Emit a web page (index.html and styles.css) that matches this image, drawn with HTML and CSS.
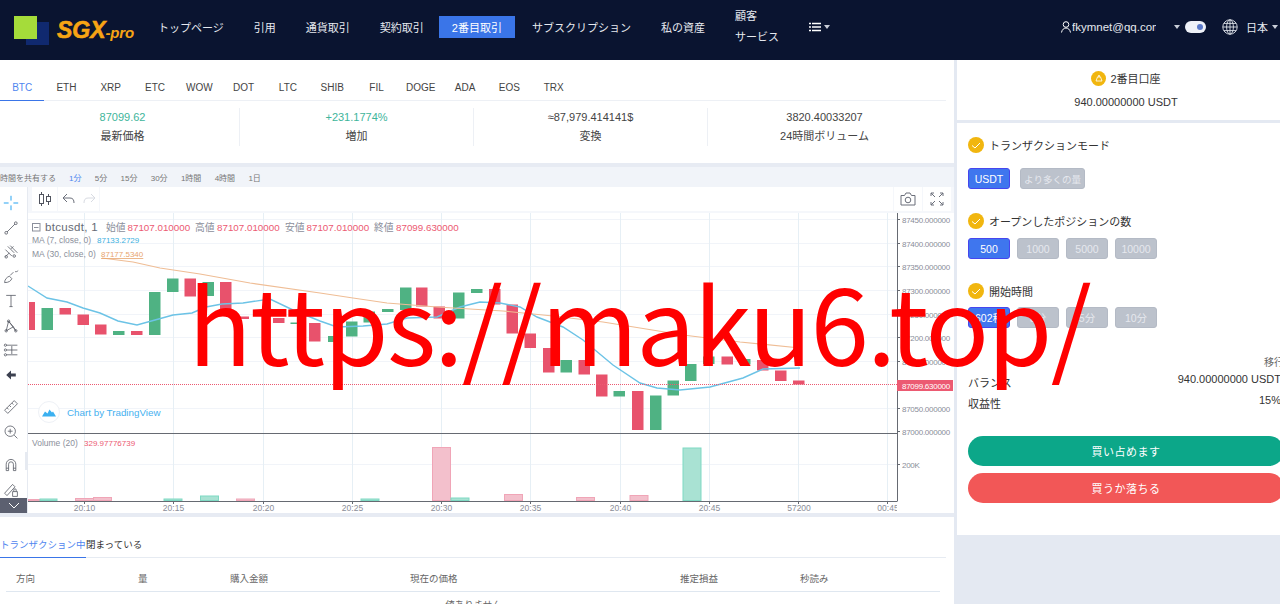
FILE: index.html
```html
<!DOCTYPE html>
<html lang="ja">

<head>
  <meta charset="UTF-8">
  <meta name="viewport" content="width=device-width, initial-scale=1.0">
  <title>SGX-pro</title>
  <link rel="stylesheet" href="styles.css">
</head>

<body>
  <header class="topbar">
    <div class="logo">
      <span class="logo-mark"></span>
      <span class="logo-text">SGX<small>-pro</small></span>
    </div>
    <nav class="nav">
      <a class="nav-item">トップページ</a>
      <a class="nav-item">引用</a>
      <a class="nav-item">通貨取引</a>
      <a class="nav-item">契約取引</a>
      <a class="nav-item nav-active">2番目取引</a>
      <a class="nav-item">サブスクリプション</a>
      <a class="nav-item">私の資産</a>
      <a class="nav-item nav-two-line"><span>顧客</span><span>サービス</span></a>
      <a class="nav-item nav-more">
        <svg width="12" height="10" viewBox="0 0 12 10">
          <path d="M0 1.5h2M3 1.5h9M0 5h2M3 5h9M0 8.5h2M3 8.5h9" stroke="#fff" stroke-width="1.6" fill="none" />
        </svg>
        <span class="caret"></span>
      </a>
    </nav>
    <div class="account">
      <svg class="user-icon" width="10" height="12" viewBox="0 0 10 12">
        <circle cx="5" cy="3.5" r="2.8" stroke="#fff" fill="none" />
        <path d="M.5 11.5C1 8.5 3 7 5 7s4 1.5 4.5 4.5" stroke="#fff" fill="none" />
      </svg>
      <span class="account-mail">fkymnet@qq.com</span>
      <span class="caret account-caret"></span>
      <span class="toggle"><i></i></span>
      <svg class="globe" width="16" height="16" viewBox="0 0 16 16">
        <g stroke="#dfe3ea" stroke-width=".9" fill="none">
          <circle cx="8" cy="8" r="7.2" />
          <ellipse cx="8" cy="8" rx="3.4" ry="7.2" />
          <path d="M8 .8v14.4M.8 8h14.4M1.8 4.4h12.4M1.8 11.6h12.4" />
        </g>
      </svg>
      <span class="lang">日本</span>
      <span class="caret"></span>
    </div>
  </header>

  <div class="layout">
    <main class="main">
      <div class="symbols">
        <a class="symbol symbol-active">BTC</a>
        <a class="symbol">ETH</a>
        <a class="symbol">XRP</a>
        <a class="symbol">ETC</a>
        <a class="symbol">WOW</a>
        <a class="symbol">DOT</a>
        <a class="symbol">LTC</a>
        <a class="symbol">SHIB</a>
        <a class="symbol">FIL</a>
        <a class="symbol">DOGE</a>
        <a class="symbol">ADA</a>
        <a class="symbol">EOS</a>
        <a class="symbol">TRX</a>
      </div>

      <div class="stats">
        <div class="stat"><span class="stat-up">87099.62</span><span>最新価格</span></div>
        <div class="stat"><span class="stat-up">+231.1774%</span><span>増加</span></div>
        <div class="stat"><span>≈87,979.414141$</span><span>変換</span></div>
        <div class="stat"><span>3820.40033207</span><span>24時間ボリューム</span></div>
      </div>

      <div class="periods">
        <span class="period-share">時間を共有する</span>
        <span class="period period-active">1分</span>
        <span class="period">5分</span>
        <span class="period">15分</span>
        <span class="period">30分</span>
        <span class="period">1時間</span>
        <span class="period">4時間</span>
        <span class="period">1日</span>
      </div>

      <section class="chart">
        <div class="tools">
          <div class="tool-group">
            <svg class="tool tool-blue" viewBox="0 0 20 20"><path d="M10 1v6M10 13v6M1 10h6M13 10h6" /></svg>
            <svg class="tool" viewBox="0 0 20 20"><path d="M5 15L15 5" /><circle cx="4" cy="16" r="1.7" /><circle cx="16" cy="4" r="1.7" /></svg>
            <svg class="tool" viewBox="0 0 20 20"><path d="M3 7l8 8M6 3l8 8M9 2l9 9M3 16l5-5M13 3l-3 3" /><circle cx="4" cy="16" r="1.6" /><circle cx="14" cy="15" r="1.6" /></svg>
            <svg class="tool" viewBox="0 0 20 20"><path d="M2 17c0-4 3-7 6-8l3 3c-1 3-4 5-9 5zM9 8l4-4M15 3c1 1 3 0 4-1" /></svg>
            <svg class="tool" viewBox="0 0 20 20"><path d="M4 3h12M10 3v14M8 17h4" /></svg>
            <svg class="tool" viewBox="0 0 20 20"><path d="M4 16L7 4l6 7 3 5M4 16l9-5M7 4l9 12" /><circle cx="7" cy="4" r="1.5" /><circle cx="4" cy="16" r="1.5" /><circle cx="16" cy="16" r="1.5" /></svg>
            <svg class="tool" viewBox="0 0 20 20"><path d="M4 4h14M4 16h14M4 10h14M11 5v10" /><circle cx="3" cy="4" r="1.4" /><circle cx="3" cy="10" r="1.4" /><circle cx="3" cy="16" r="1.4" /></svg>
            <svg class="tool" viewBox="0 0 20 20"><path class="tool-solid" d="M10 4.500L4 10l6 5.500V12h6V8h-6z" /></svg>
          </div>
          <div class="tool-group tool-group-measure">
            <svg class="tool" viewBox="0 0 20 20"><path d="M2 14L14 2l4 4L6 18zM5 11l2 2M8 8l2 2M11 5l2 2" /></svg>
            <svg class="tool" viewBox="0 0 20 20"><circle cx="9" cy="9" r="6.5" /><path d="M14 14l4 4M9 6v6M6 9h6" /></svg>
          </div>
          <div class="tool-group tool-group-magnet">
            <svg class="tool" viewBox="0 0 20 20"><path d="M4 17V9a6 6 0 0 1 12 0v8h-3V9a3 3 0 0 0-6 0v8zM4 14h3M13 14h3" /></svg>
            <svg class="tool" viewBox="0 0 20 20"><path d="M2 14L12 3l3 3L5 17zM12 12h6v6h-6zM13.500 12v-2a1.500 1.500 0 0 1 3 0v2" /></svg>
          </div>
          <span class="tools-toggle">
            <svg width="12" height="7" viewBox="0 0 12 7"><path d="M1 1l5 5 5-5" stroke="#fff" fill="none" /></svg>
          </span>
          <span class="tools-handle"></span>
        </div>

        <div class="pane">
          <div class="pane-top">
            <span class="pane-cell">
              <svg width="16" height="16" viewBox="0 0 16 16">
                <path d="M4.500 1v14M11.500 3v11" stroke="#50535e" fill="none" />
                <rect x="2.500" y="3.500" width="4" height="9" fill="#fff" stroke="#50535e" />
                <rect x="9.500" y="5.500" width="4" height="5" fill="#fff" stroke="#50535e" />
              </svg>
            </span>
            <span class="pane-cell pane-cell-history">
              <svg width="14" height="12" viewBox="0 0 14 12"><path d="M5 1L1 5l4 4M1 5h7c3 0 4 2 4 5" stroke="#6b6f7a" fill="none" /></svg>
              <svg width="14" height="12" viewBox="0 0 14 12"><path d="M9 1l4 4-4 4M13 5H6c-3 0-4 2-4 5" stroke="#d8dbe2" fill="none" /></svg>
            </span>
            <span class="pane-spacer"></span>
            <span class="pane-cell pane-cell-end">
              <svg width="16" height="14" viewBox="0 0 16 14">
                <path d="M1 3.500h3.500L6 1h4l1.500 2.500H15V13H1z" stroke="#6b6f7a" fill="none" />
                <circle cx="8" cy="8" r="2.800" stroke="#6b6f7a" fill="none" />
              </svg>
            </span>
            <span class="pane-cell pane-cell-end">
              <svg width="14" height="14" viewBox="0 0 14 14"><path d="M1 1l4 4M1 1v3M1 1h3M13 1L9 5M13 1v3M13 1h-3M1 13l4-4M1 13v-3M1 13h3M13 13L9 9M13 13v-3M13 13h-3" stroke="#6b6f7a" fill="none" /></svg>
            </span>
          </div>

          <svg class="plot" width="926" height="300" viewBox="28 213 926 300">
            <g class="grid-h">
              <path d="M28 219.500H897M28 243.500H897M28 266.500H897M28 290.500H897M28 314.500H897M28 337.500H897M28 361.500H897M28 408.500H897M28 464.500H897" />
            </g>
            <g class="grid-v">
              <path d="M84.500 213V501M173.500 213V501M263.500 213V501M352.500 213V501M441.500 213V501M530.500 213V501M620.500 213V501M709.500 213V501M798.500 213V501M887.500 213V501" />
            </g>

            <g class="bar-down">
              <rect x="29" y="302" width="6" height="28" />
              <rect x="59.500" y="308" width="11.500" height="6.500" />
              <rect x="77.500" y="314.500" width="11.500" height="10.500" />
              <rect x="95" y="324.500" width="11.500" height="10" />
              <rect x="131" y="331" width="11.500" height="4" />
              <rect x="184.500" y="278.500" width="11.500" height="18" />
              <rect x="220" y="282" width="11.500" height="34" />
              <rect x="237.500" y="316.500" width="11.500" height="2.500" />
              <rect x="273" y="318" width="11.500" height="5" />
              <rect x="309" y="323" width="11.500" height="18.500" />
              <rect x="416" y="287.500" width="11.500" height="19" />
              <rect x="433.500" y="306.500" width="11.500" height="12" />
              <rect x="489" y="289" width="11.500" height="15.500" />
              <rect x="506.500" y="304.500" width="11.500" height="29" />
              <rect x="524.500" y="333.500" width="11.500" height="14.500" />
              <rect x="543" y="348" width="11.500" height="24.500" />
              <rect x="578.500" y="360" width="11.500" height="14.500" />
              <rect x="596" y="374.500" width="11.500" height="22" />
              <rect x="632" y="391" width="11.500" height="39" />
              <rect x="721.500" y="356.500" width="11.500" height="8" />
              <rect x="757" y="360" width="11.500" height="10.500" />
              <rect x="775" y="370.500" width="11.500" height="10.500" />
              <rect x="793" y="380.500" width="11.500" height="4" />
            </g>
            <g class="bar-up">
              <rect x="41.500" y="308" width="11.500" height="22" />
              <rect x="113" y="331" width="11.500" height="4" />
              <rect x="149" y="292" width="11.500" height="43" />
              <rect x="167" y="278.500" width="11.500" height="13.500" />
              <rect x="202.500" y="282" width="11.500" height="14" />
              <rect x="290.500" y="322.500" width="11.500" height="1.500" />
              <rect x="328" y="336" width="11.500" height="6" />
              <rect x="346" y="321.500" width="11.500" height="15" />
              <rect x="363.500" y="311.500" width="11.500" height="11" />
              <rect x="382" y="309" width="11.500" height="3" />
              <rect x="400" y="287.500" width="11.500" height="22.500" />
              <rect x="453" y="292.500" width="11.500" height="26" />
              <rect x="471" y="289" width="11.500" height="4" />
              <rect x="560.500" y="360" width="11.500" height="12.500" />
              <rect x="613.500" y="391" width="11.500" height="5.500" />
              <rect x="650" y="395.500" width="11.500" height="34.500" />
              <rect x="667.500" y="380.500" width="11.500" height="15" />
              <rect x="685" y="364" width="11.500" height="17" />
              <rect x="703" y="356.500" width="11.500" height="7.500" />
              <rect x="739" y="359" width="11.500" height="5.500" />
            </g>

            <polyline class="ma-fast" points="28,286 47,298 67,302 83,308 100,313 118,321 137,325 155,320 173,315 192,313 206,307 222,304 243,303 270,299 293,310 320,321 337,327 363,326 387,324 407,318 437,317 460,307 480,302 500,303 520,307 537,317 563,327 583,340 613,365 640,383 657,388 680,390 710,387 743,378 763,369 800,368" />
            <polyline class="ma-slow" points="102,258 133,262 160,268 200,274 250,283 320,293 353,298 387,303 437,307 503,311 553,316 603,322 640,328 683,335 740,342 800,348" />

            <g class="vol-down">
              <rect x="28.500" y="499.500" width="11" height="1" />
              <rect x="75.500" y="498.500" width="18" height="2" />
              <rect x="93.500" y="497.500" width="18" height="3" />
              <rect x="236.500" y="499" width="18" height="1.500" />
              <rect x="432.500" y="447.500" width="18" height="53" />
              <rect x="504.500" y="494.500" width="18" height="6" />
              <rect x="576.500" y="497.500" width="18" height="3" />
              <rect x="630" y="495.500" width="18" height="5" />
            </g>
            <g class="vol-up">
              <rect x="40" y="499" width="17" height="1.500" />
              <rect x="164" y="499" width="18" height="1.500" />
              <rect x="200.500" y="496" width="18" height="4.500" />
              <rect x="361" y="499" width="18" height="1.500" />
              <rect x="451" y="498" width="18" height="2.500" />
              <rect x="683" y="448" width="18" height="52.500" />
            </g>

            <path class="axis" d="M28 433.500H897M28 501.500H897M897.500 213V501.500" />
            <path class="axis" d="M897 219.500h3M897 243.500h3M897 266.500h3M897 290.500h3M897 314.500h3M897 337.500h3M897 361.500h3M897 408.500h3M897 431.500h3M897 464.500h3M84.500 501v3M173.500 501v3M263.500 501v3M352.500 501v3M441.500 501v3M530.500 501v3M620.500 501v3M709.500 501v3M798.500 501v3M887.500 501v3" />
            <path class="last-line" d="M28 384.500H897" />

            <rect x="32.500" y="223.500" width="7.500" height="7.500" class="legend-box" />
            <path d="M34 227.500h4.500" class="legend-box" />
            <text x="45" y="231" class="legend-title">btcusdt, 1</text>
            <text y="231" class="legend-ohlc">
              <tspan x="106">始値</tspan><tspan x="127.500" class="red">87107.010000</tspan>
              <tspan x="195">高値</tspan><tspan x="217" class="red">87107.010000</tspan>
              <tspan x="285">安値</tspan><tspan x="306.500" class="red">87107.010000</tspan>
              <tspan x="374">終値</tspan><tspan x="396" class="red">87099.630000</tspan>
            </text>
            <text x="32" y="243" class="legend-ma">MA (7, close, 0)</text>
            <text x="97" y="243" class="legend-num fast">87133.2729</text>
            <text x="32" y="257" class="legend-ma">MA (30, close, 0)</text>
            <text x="101" y="257" class="legend-num slow">87177.5340</text>
            <text x="32" y="446" class="legend-ma">Volume (20)</text>
            <text x="84" y="446" class="legend-num red">329.97776739</text>

            <circle cx="49" cy="412" r="10.500" class="tv-badge" />
            <path d="M42 416.500l3-5 2.500 2 2-4 2.500 3 1-1 3 5z" fill="#3bb0f0" />
            <text x="67" y="415.500" class="tv-text">Chart by TradingView</text>

            <g class="price-labels">
              <text x="902" y="222.500">87450.000000</text>
              <text x="902" y="246.500">87400.000000</text>
              <text x="902" y="269.500">87350.000000</text>
              <text x="902" y="293.500">87300.000000</text>
              <text x="902" y="317.500">87250.000000</text>
              <text x="902" y="340.500">87200.000000</text>
              <text x="902" y="364.500">87150.000000</text>
              <text x="902" y="411.500">87050.000000</text>
              <text x="902" y="434.500">87000.000000</text>
              <text x="902" y="467.500">200K</text>
            </g>
            <rect x="897" y="380" width="56" height="11" class="last-tag" />
            <text x="902" y="388.500" class="last-text">87099.630000</text>

            <g class="time-labels">
              <text x="84.500" y="511">20:10</text>
              <text x="173.500" y="511">20:15</text>
              <text x="263.500" y="511">20:20</text>
              <text x="352.500" y="511">20:25</text>
              <text x="441.500" y="511">20:30</text>
              <text x="530.500" y="511">20:35</text>
              <text x="620.500" y="511">20:40</text>
              <text x="709.500" y="511">20:45</text>
              <text x="799" y="511">57200</text>
            </g>
            <svg x="870" y="500" width="27" height="13" viewBox="870 500 27 13">
              <text x="888" y="511" class="time-clip">00:45</text>
            </svg>
          </svg>
        </div>
      </section>

      <section class="orders">
        <div class="order-tabs">
          <a class="order-tab order-tab-active">トランザクション中</a>
          <a class="order-tab">閉まっている</a>
        </div>
        <div class="order-head">
          <span>方向</span>
          <span>量</span>
          <span>購入金額</span>
          <span>現在の価格</span>
          <span>推定損益</span>
          <span>秒読み</span>
        </div>
        <p class="order-empty">値ありません</p>
      </section>
    </main>

    <aside class="side">
      <div class="wallet">
        <div class="wallet-title">
          <span class="coin">
            <svg width="8" height="8" viewBox="0 0 8 8"><path d="M1 7l1.500-4h3L7 7zM3 3l1-2 1 2" stroke="#fff" stroke-width=".8" fill="none" /></svg>
          </span>
          2番目口座
        </div>
        <div class="wallet-amount">940.00000000 USDT</div>
      </div>

      <div class="trade">
        <div class="trade-label trade-label-first">
          <span class="check"><svg width="10" height="7" viewBox="0 0 10 7"><path d="M1 3.500l3 2.500 5-5" stroke="#fff" fill="none" /></svg></span>
          トランザクションモード
        </div>
        <div class="options options-mode">
          <button class="option option-on">USDT</button>
          <button class="option option-wide">より多くの量</button>
        </div>

        <div class="trade-label trade-label-count">
          <span class="check"><svg width="10" height="7" viewBox="0 0 10 7"><path d="M1 3.500l3 2.500 5-5" stroke="#fff" fill="none" /></svg></span>
          オープンしたポジションの数
        </div>
        <div class="options">
          <button class="option option-on">500</button>
          <button class="option">1000</button>
          <button class="option">5000</button>
          <button class="option">10000</button>
        </div>

        <div class="trade-label trade-label-time">
          <span class="check"><svg width="10" height="7" viewBox="0 0 10 7"><path d="M1 3.500l3 2.500 5-5" stroke="#fff" fill="none" /></svg></span>
          開始時間
        </div>
        <div class="options options-time">
          <button class="option option-on">602秒</button>
          <button class="option">3分</button>
          <button class="option">5分</button>
          <button class="option">10分</button>
        </div>

        <div class="move-link">移行</div>
        <div class="info-row"><span>バランス</span><span class="info-value">940.00000000 USDT</span></div>
        <div class="info-row"><span>収益性</span><span class="info-value">15%</span></div>

        <button class="pill pill-buy">買い占めます</button>
        <button class="pill pill-sell">買うか落ちる</button>
      </div>
    </aside>
  </div>

  <div class="watermark">https://maku6.top/</div>
</body>

</html>
```

FILE: styles.css
```css
body {
  margin: 0;
  height: 604px;
  overflow: hidden;
  position: relative;
  font-family: "Liberation Sans", "Noto Sans CJK JP", sans-serif;
  font-size: 11px;
  color: #333;
  background-color: #e4e9f2;
}

/* header */
.topbar {
  display: flex;
  align-items: center;
  height: 60px;
  background-color: #0a1430;
  color: #e6e9ef;
}

.logo {
  display: flex;
  align-items: center;
  width: 143px;
  flex-shrink: 0;
  height: 60px;
}

.logo-mark {
  position: relative;
  width: 23px;
  height: 23px;
  margin: -5px 0 0 14px;
  background-color: #a5dc3a;
  box-shadow: 12px 6px 0 #10296f;
}

.logo-text {
  margin: 0 0 0 20px;
  font-size: 23px;
  font-weight: bold;
  font-style: italic;
  color: #f7a414;
  white-space: nowrap;
  -webkit-text-stroke: 0.6px #f7a414;
}

.logo-text small {
  font-size: 15px;
  letter-spacing: -0.2px;
  -webkit-text-stroke: 0;
}

.nav {
  display: flex;
  align-items: center;
  margin-bottom: 6px;
}

.nav-item {
  display: flex;
  align-items: center;
  padding: 0 15px;
  white-space: nowrap;
}

.nav-active {
  height: 22px;
  margin: 0 2px 0 0;
  padding: 0 13px;
  background-color: #3a75e8;
  color: #fff;
}

.nav-two-line {
  flex-direction: column;
  align-items: flex-start;
  line-height: 21px;
}

.nav-more {
  gap: 3px;
}

.caret {
  display: inline-block;
  width: 0;
  height: 0;
  border-left: 3.5px solid transparent;
  border-right: 3.5px solid transparent;
  border-top: 4px solid #c9ced8;
}

.account {
  display: flex;
  align-items: center;
  margin: 0 0 6px auto;
  padding-right: 2px;
}

.user-icon {
  margin-right: 1px;
}

.account-mail {
  width: 84px;
  overflow: hidden;
  white-space: nowrap;
  font-size: 11.5px;
}

.account-caret {
  margin-left: 18px;
}

.toggle {
  display: flex;
  align-items: center;
  justify-content: flex-end;
  width: 21px;
  height: 12px;
  margin-left: 5px;
  padding: 0 3px;
  box-sizing: border-box;
  border-radius: 6px;
  background-color: #eef1f8;
}

.toggle i {
  width: 6px;
  height: 6px;
  border-radius: 50%;
  background-color: #5a78c8;
}

.globe {
  margin-left: 16px;
}

.lang {
  margin: 0 4px 0 8px;
}

/* page columns */
.layout {
  display: flex;
  align-items: flex-start;
}

.main {
  width: 954px;
  flex-shrink: 0;
  background-color: #fff;
}

.side {
  width: 338px;
  flex-shrink: 0;
  margin-left: 3px;
}

/* symbol tabs */
.symbols {
  display: flex;
  height: 41px;
  margin-right: 8px;
  border-bottom: 1px solid #edf0f5;
  box-sizing: border-box;
}

.symbol {
  width: 44.3px;
  padding-top: 22px;
  box-sizing: border-box;
  text-align: center;
  font-size: 10px;
  line-height: 11px;
  color: #444;
}

.symbol-active {
  height: 41px;
  border-bottom: 1.5px solid #3a75e8;
  color: #4f86ef;
}

/* stats */
.stats {
  display: flex;
  height: 62px;
  padding: 7px 13px 0 6px;
  box-sizing: border-box;
}

.stat {
  display: flex;
  flex-direction: column;
  align-items: center;
  flex: 1;
  height: 35px;
  gap: 6px;
  padding-top: 3px;
  line-height: 13px;
  border-left: 1px solid #edf0f5;
  color: #444;
}

.stat:first-child {
  border-left: none;
}

.stat-up {
  color: #3eb59b;
}

/* period row */
.periods {
  display: flex;
  align-items: center;
  height: 20px;
  border-top: 4px solid #e7ebf3;
  background-color: #f1f4f9;
  font-size: 8px;
  color: #777;
  overflow: hidden;
}

.period-share {
  width: 69px;
  flex-shrink: 0;
}

.period {
  margin-right: 13.300px;
}

.period-active {
  color: #4f86ef;
}

/* chart */
.chart {
  display: flex;
  height: 326px;
}

.tools {
  position: relative;
  width: 28px;
  flex-shrink: 0;
  padding-top: 4px;
  box-sizing: border-box;
  background-color: #fff;
  border-right: 1px solid #e6eaf1;
  overflow: hidden;
}

.tool-group {
  display: flex;
  flex-direction: column;
  width: 21px;
}

.tool-group-measure {
  margin-top: 8px;
}

.tool-group-magnet {
  margin-top: 9px;
}

.tool {
  width: 16px;
  height: 16px;
  margin: 4.25px auto;
  fill: none;
  stroke: #555963;
  stroke-width: 1;
}

.tool-blue {
  stroke: #1ea0f0;
  stroke-width: 1.2;
}

.tool-solid {
  fill: #3c4150;
  stroke: none;
}

.tools-toggle {
  position: absolute;
  left: 0;
  bottom: 0;
  display: flex;
  align-items: center;
  justify-content: center;
  width: 28px;
  height: 15px;
  background-color: #5c6070;
}

.tools-handle {
  position: absolute;
  right: 0;
  top: 265px;
  width: 2px;
  height: 18px;
  background-color: #e6eaf1;
}

.pane {
  flex: 1;
  padding-left: 0;
  min-width: 0;
}

.pane-top {
  display: flex;
  height: 26px;
  padding-left: 4px;
  box-sizing: border-box;
  background-color: #f5f7fb;
}

.pane-cell {
  display: flex;
  align-items: center;
  justify-content: center;
  gap: 6px;
  width: 25px;
  height: 24px;
  margin-right: 1px;
  background-color: #fff;
}

.pane-cell-history {
  width: 41px;
}

.pane-spacer {
  flex: 1;
  height: 24px;
  margin-right: 1px;
  background-color: #fff;
}

.pane-cell-end {
  width: 28px;
}

.pane-cell-end:last-child {
  margin-right: 3px;
}

.plot {
  display: block;
  background-color: #fff;
  font-family: "Liberation Sans", "Noto Sans CJK JP", sans-serif;
}

.grid-h path {
  stroke: #f1f4f9;
  fill: none;
}

.grid-v path {
  stroke: #e6eff5;
  fill: none;
}

.bar-down {
  fill: #e8526c;
}

.bar-up {
  fill: #4fb283;
}

.vol-down {
  fill: #f3c0cc;
  stroke: #f0a5b7;
  stroke-width: 1;
}

.vol-up {
  fill: #a9e2d3;
  stroke: #7fd9c3;
  stroke-width: 1;
}

.ma-fast {
  fill: none;
  stroke: #6cc3e6;
  stroke-width: 1.4;
}

.ma-slow {
  fill: none;
  stroke: #efbd95;
  stroke-width: 1.2;
}

.axis {
  stroke: #666a72;
  fill: none;
}

.last-line {
  stroke: #ec5a72;
  stroke-dasharray: 1 1;
  fill: none;
}

.legend-box {
  fill: none;
  stroke: #8b8f9b;
}

.legend-title {
  font-size: 11.5px;
  letter-spacing: 0.3px;
  fill: #666a75;
}

.legend-ohlc {
  font-size: 9.800px;
  fill: #8b8f9b;
}

.legend-ma {
  font-size: 8.5px;
  fill: #8b8f9b;
}

.legend-num {
  font-size: 8px;
}

.red {
  fill: #ec5a72;
}

.fast {
  fill: #3bb0e0;
}

.slow {
  fill: #e8a56e;
  text-decoration: underline;
}

.tv-badge {
  fill: #fff;
  stroke: #eef1f6;
}

.tv-text {
  font-size: 9.800px;
  fill: #45b0ef;
}

.price-labels text {
  font-size: 8px;
  letter-spacing: -0.27px;
  fill: #8a8e99;
}

.last-tag {
  fill: #ec5a72;
}

.last-text {
  font-size: 8px;
  letter-spacing: -0.27px;
  fill: #fff;
}

.time-labels text,
.time-clip {
  font-size: 8.5px;
  text-anchor: middle;
  fill: #8a8e99;
}

/* orders */
.orders {
  border-top: 4px solid #e7ebf3;
  height: 300px;
}

.order-tabs {
  display: flex;
  height: 41px;
  margin-right: 8px;
  padding-top: 21px;
  box-sizing: border-box;
  border-bottom: 1px solid #e6ebf2;
}

.order-tab {
  height: 20px;
  line-height: 14px;
  font-size: 9.5px;
  color: #333;
}

.order-tab-active {
  width: 86px;
  box-sizing: border-box;
  border-bottom: 1.5px solid #3a75e8;
  color: #4f86ef;
}

.order-head {
  display: grid;
  grid-template-columns: 122px 92px 180px 270px 120px 1fr;
  align-items: center;
  height: 34px;
  margin: 0 14px 0 6px;
  padding: 7px 0 0 10px;
  box-sizing: border-box;
  border-bottom: 1px solid #dfe7f0;
  font-size: 9.5px;
  color: #666;
}

.order-empty {
  margin: 5px 0 0;
  padding-right: 7px;
  text-align: center;
  font-size: 9.5px;
  color: #666;
}

/* right panel */
.wallet {
  height: 60px;
  margin-bottom: 3px;
  padding-top: 11px;
  box-sizing: border-box;
  background-color: #fff;
  text-align: center;
}

.wallet-title {
  display: flex;
  align-items: center;
  justify-content: center;
  gap: 4px;
  height: 14px;
}

.coin {
  display: flex;
  align-items: center;
  justify-content: center;
  width: 15px;
  height: 15px;
  border-radius: 50%;
  background-color: #f1b60f;
}

.wallet-amount {
  margin-top: 11px;
  line-height: 13px;
}

.trade {
  height: 412px;
  padding: 14px 11px 0;
  box-sizing: border-box;
  background-color: #fff;
}

.trade-label {
  display: flex;
  align-items: center;
  gap: 5px;
  height: 16px;
}

.trade-label-count {
  margin-top: 24px;
}

.trade-label-time {
  margin-top: 24px;
}

.check {
  display: flex;
  align-items: center;
  justify-content: center;
  width: 16px;
  height: 16px;
  border-radius: 50%;
  background-color: #f1b60f;
}

.options {
  display: flex;
  gap: 7px;
  margin-top: 9px;
}

.options-mode {
  gap: 10px;
  margin-top: 15px;
}

.options-time {
  margin-top: 8px;
}

.option {
  width: 42px;
  height: 21px;
  padding: 0;
  border: 1px solid #b4bac5;
  border-radius: 3px;
  background-color: #bcc2cc;
  color: #e6e8ee;
  font-family: inherit;
  font-size: 10.5px;
  white-space: nowrap;
}

.option-wide {
  width: 65px;
  font-size: 9.5px;
}

.option-on {
  border-color: #4646ee;
  background-color: #3f76ee;
  color: #fff;
}

.move-link {
  margin-top: 28px;
  text-align: right;
  font-size: 10px;
  line-height: 13px;
  color: #666;
}

.info-row {
  display: flex;
  justify-content: space-between;
  height: 21px;
  margin-top: 4px;
  margin-bottom: -4px;
  line-height: 13px;
}

.info-row span:first-child {
  padding-top: 4px;
}

.info-value {
  padding-right: 3px;
}

.pill {
  display: block;
  width: 316px;
  height: 30px;
  padding: 0;
  border: none;
  border-radius: 15px;
  color: #fff;
  font-family: inherit;
  font-size: 11px;
  letter-spacing: 0.5px;
}

.pill-buy {
  margin-top: 25px;
  background-color: #0ca789;
}

.pill-sell {
  margin-top: 7px;
  background-color: #f25757;
}

/* overlay text across the page */
.watermark {
  position: absolute;
  left: 188px;
  top: 268px;
  font-family: "Noto Sans CJK SC", sans-serif;
  font-size: 105px;
  line-height: 105px;
  letter-spacing: -1.7px;
  color: #ff0000;
  white-space: nowrap;
  pointer-events: none;
}
```
